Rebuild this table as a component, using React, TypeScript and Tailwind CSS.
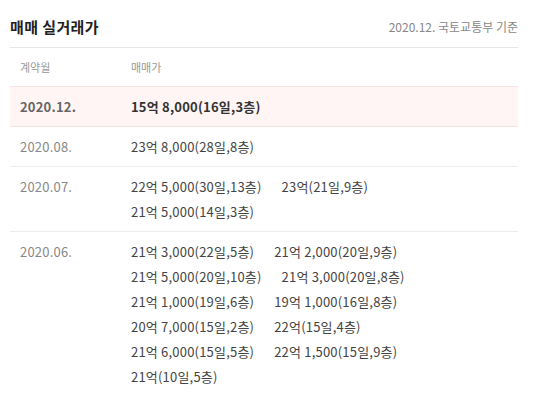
import { clsx } from 'clsx';

type Row = { month: string; prices: string[]; current?: boolean };

const ROWS: Row[] = [
  { month: '2020.12.', prices: ['15억 8,000(16일,3층)'], current: true },
  { month: '2020.08.', prices: ['23억 8,000(28일,8층)'] },
  { month: '2020.07.', prices: ['22억 5,000(30일,13층)', '23억(21일,9층)', '21억 5,000(14일,3층)'] },
  {
    month: '2020.06.',
    prices: [
      '21억 3,000(22일,5층)',
      '21억 2,000(20일,9층)',
      '21억 5,000(20일,10층)',
      '21억 3,000(20일,8층)',
      '21억 1,000(19일,6층)',
      '19억 1,000(16일,8층)',
      '20억 7,000(15일,2층)',
      '22억(15일,4층)',
      '21억 6,000(15일,5층)',
      '22억 1,500(15일,9층)',
      '21억(10일,5층)',
    ],
  },
];

export default function App() {
  return (
    <div
      className="w-[534px] h-[394px] bg-white pl-[10px] pr-[16px] overflow-hidden"
      style={{ fontFamily: '"Noto Sans CJK KR", "Noto Sans", sans-serif' }}
    >
      {/* Title */}
      <div className="flex items-center justify-between pt-[16px] pb-[9px] border-b border-[#e5e5e5]">
        <h2 className="text-[15px] leading-[22px] font-bold text-[#222] tracking-[0.4px]">매매 실거래가</h2>
        <span className="text-[12px] leading-[22px] text-[#888]">2020.12. 국토교통부 기준</span>
      </div>

      {/* Column labels */}
      <div className="flex h-[38px] items-center text-[11px] text-[#999]">
        <span className="w-[121px] pl-[10px]">계약월</span>
        <span>매매가</span>
      </div>

      {ROWS.map((r) => (
        <div
          key={r.month}
          className={clsx(
            'flex py-[7px] text-[13px] leading-[25px] border-b tracking-[0.2px]',
            r.current ? 'bg-[#fff5f5] border-t border-[#fde0e0] border-b-[#fde0e0]' : 'border-[#eee]',
          )}
        >
          <span className={clsx('w-[121px] shrink-0 pl-[10px]', r.current ? 'font-bold text-[#666]' : 'text-[#888]')}>
            {r.month}
          </span>
          {/* two deals per line, like the source list */}
          <div className="flex flex-wrap w-[310px]">
            {r.prices.map((p, i) => (
              <span
                key={i}
                className={clsx(
                  'mr-[20px] whitespace-nowrap',
                  r.current ? 'font-bold text-[#333]' : 'text-[#444]',
                )}
              >
                {p}
              </span>
            ))}
          </div>
        </div>
      ))}
    </div>
  );
}
